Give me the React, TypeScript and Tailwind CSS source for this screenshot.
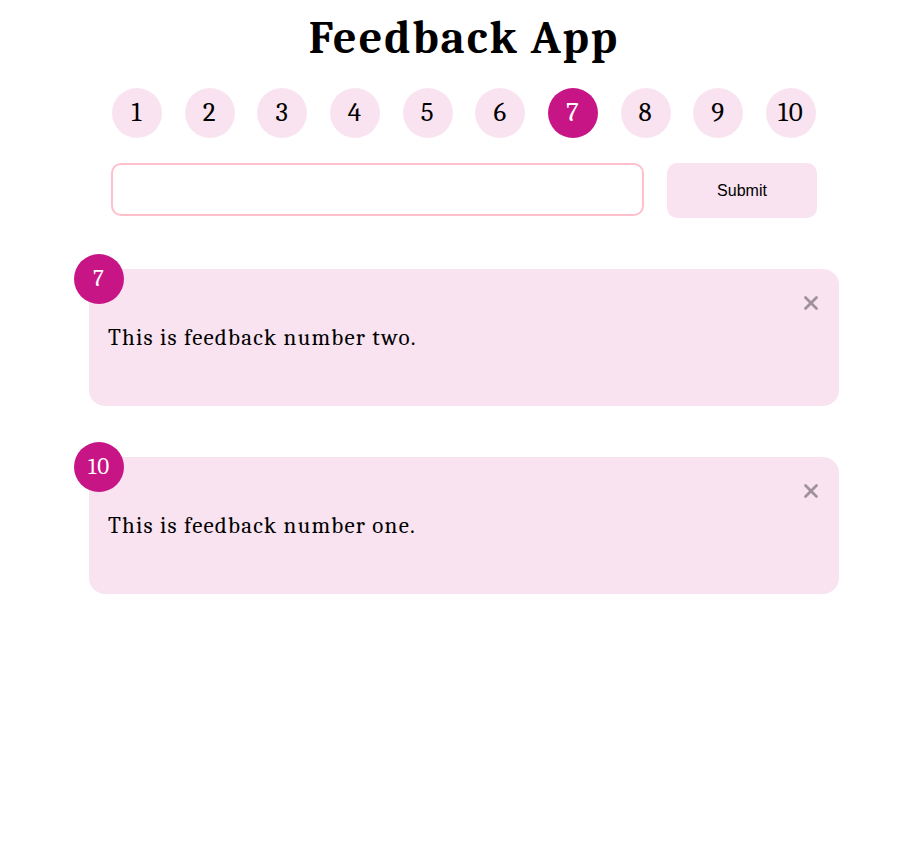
import { X } from "lucide-react";

const ratings = [1, 2, 3, 4, 5, 6, 7, 8, 9, 10];

const feedback = [
  { id: 2, rating: 7, text: "This is feedback number two." },
  { id: 1, rating: 10, text: "This is feedback number one." },
];

const serif = "font-['Cambria','Noto_Serif','DejaVu_Serif',serif]";

export default function App() {
  const selected = 7;

  return (
    <div className={`min-h-[848px] bg-white text-black ${serif}`}>
      <div className="w-[750px] ml-[89px] pt-[9px]">
        <h1 className="text-center text-[46px] font-bold leading-[60px] tracking-[2px]">Feedback App</h1>

        {/* Rating select */}
        <ul className="w-[704px] mx-auto mt-[19px] flex justify-between">
          {ratings.map((r) => (
            <li
              key={r}
              className={`w-[50px] h-[50px] rounded-full flex items-center justify-center text-[27px] tracking-[1px] ${
                r === selected ? "bg-[#c71585] text-white" : "bg-[#f9e3f0] text-black"
              }`}
            >
              {r}
            </li>
          ))}
        </ul>

        {/* Input */}
        <form className="ml-[22px] mt-[25px] flex items-start gap-[23px]">
          <input
            type="text"
            className="w-[533px] h-[53px] rounded-[10px] border-2 border-[#ffc0cb] outline-none px-3"
          />
          <button
            type="button"
            className="w-[150px] h-[55px] rounded-[10px] bg-[#f9e3f0] text-[16px] font-['Liberation_Sans',Arial,sans-serif]"
          >
            Submit
          </button>
        </form>

        {/* List */}
        <div className="mt-[51px] flex flex-col gap-[51px]">
          {feedback.map((f) => (
            <div key={f.id} className="relative h-[137px] rounded-[16px] bg-[#f9e3f0] px-[19px] pt-[55px]">
              <div className="absolute -left-[15px] -top-[15px] w-[50px] h-[50px] rounded-full bg-[#c71585] text-white flex items-center justify-center text-[23px] tracking-[1px]">
                {f.rating}
              </div>
              <button className="absolute right-[17px] top-[23px] text-[#a0919a]">
                <X size={22} strokeWidth={3} />
              </button>
              <p className="text-[23px] leading-[28px] tracking-[1.2px]">{f.text}</p>
            </div>
          ))}
        </div>
      </div>
    </div>
  );
}
